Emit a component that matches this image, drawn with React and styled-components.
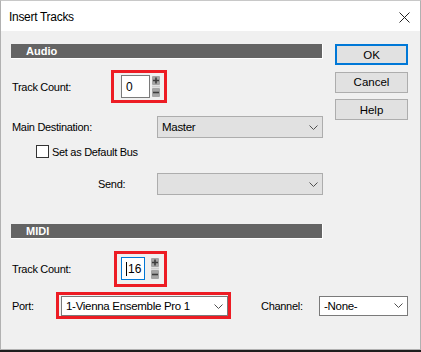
import React from 'react';
import styled, { createGlobalStyle } from 'styled-components';

const GlobalStyle = createGlobalStyle`
  html, body {
    margin: 0;
    padding: 0;
    background: #1e1e1e;
  }
  body {
    font-family: "Liberation Sans", Arial, sans-serif;
    font-size: 11px;
    color: #000;
  }
`;

const Window = styled.div`
  width: 421px;
  height: 350px;
  box-sizing: border-box;
  border: 1px solid #b1b1b1;
  border-top-color: #c8c8c8;
  background: #f0f0f0;
  display: flex;
  flex-direction: column;
`;

const TitleBar = styled.div`
  height: 30px;
  background: #fff;
  display: flex;
  align-items: center;
  justify-content: space-between;
  padding: 0 10px 0 8px;
  flex-shrink: 0;
`;

const Title = styled.span`
  font-size: 12px;
  letter-spacing: -0.3px;
  color: #000;
  padding-top: 2px;
`;

const CloseIcon = styled.svg`
  width: 11px;
  height: 11px;
  margin-top: 2px;
`;

const Body = styled.div`
  flex: 1;
  display: grid;
  grid-template-columns: 312px 73px;
  column-gap: 12px;
  align-content: start;
  padding: 13px 0 0 10px;
`;

const Section = styled.div`
  display: flex;
  flex-direction: column;
  grid-column: ${p => (p.$span ? '1 / -1' : 'auto')};
  margin-top: ${p => p.$top || 0}px;
`;

const SectionBar = styled.div`
  width: 296px;
  height: 14px;
  padding-left: 15px;
  background: #646464;
  border-right: 1px solid #fff;
  border-bottom: 1px solid #fff;
  color: #fff;
  font-weight: bold;
  font-size: 11px;
  line-height: 14px;
`;

const Row = styled.div`
  display: flex;
  align-items: center;
  margin-top: ${p => p.$top || 0}px;
  padding-left: ${p => p.$indent || 0}px;
`;

const Label = styled.span`
  width: ${p => p.$w}px;
  flex-shrink: 0;
  box-sizing: border-box;
  padding-left: ${p => p.$pl ?? 1}px;
  margin-left: ${p => p.$ml || 0}px;
  letter-spacing: -0.3px;
  white-space: nowrap;
`;

const Highlight = styled.div`
  display: inline-flex;
  align-items: center;
  border: 3px solid #ed1c24;
  padding: ${p => p.$pad};
  gap: ${p => p.$gap || 0}px;
`;

const NumberField = styled.div`
  width: ${p => p.$w}px;
  height: ${p => p.$h}px;
  box-sizing: border-box;
  background: #fff;
  border: 1px solid ${p => (p.$focused ? '#0078d7' : '#7a7a7a')};
  display: flex;
  align-items: center;
  padding-left: 4px;
  font-size: 12px;
  color: #000;
`;

const Caret = styled.span`
  display: inline-block;
  width: 1px;
  height: 14px;
  background: #000;
  margin-right: 1px;
`;

const Spinner = styled.svg`
  width: 8px;
  height: 21px;
  flex-shrink: 0;
`;

const Select = styled.div`
  width: ${p => p.$w}px;
  height: ${p => p.$h}px;
  box-sizing: border-box;
  display: flex;
  align-items: center;
  justify-content: space-between;
  padding: 0 4px 0 4px;
  background: ${p => (p.$plain ? '#fff' : '#e1e1e1')};
  border: 1px solid ${p => (p.$plain ? '#7a7a7a' : '#adadad')};
  font-size: 11.5px;
  letter-spacing: -0.3px;
  white-space: nowrap;
`;

const Chevron = styled.svg`
  width: 9px;
  height: 5px;
  flex-shrink: 0;
`;

const CheckBox = styled.span`
  width: 13px;
  height: 13px;
  box-sizing: border-box;
  border: 1px solid #333;
  background: #fff;
  margin-right: 3px;
  flex-shrink: 0;
`;

const ButtonColumn = styled.div`
  display: flex;
  flex-direction: column;
  gap: 6.5px;
`;

const Button = styled.div`
  height: 21px;
  box-sizing: border-box;
  display: flex;
  align-items: center;
  justify-content: center;
  background: #e1e1e1;
  border: ${p => (p.$default ? '2px solid #0078d7' : '1px solid #adadad')};
  font-size: 11.5px;
  color: #000;
`;

const ChevronDown = () => (
  <Chevron viewBox="0 0 9 5">
    <path d="M0.5 0.5 L4.5 4.5 L8.5 0.5" fill="none" stroke="#505050" strokeWidth="1" />
  </Chevron>
);

const SpinButtons = () => (
  <Spinner viewBox="0 0 8 21">
    <rect x="0" y="0" width="8" height="9" rx="1" fill="#a4a4a4" />
    <rect x="0" y="9.5" width="8" height="2" fill="#cfcfcf" />
    <rect x="0" y="12" width="8" height="9" rx="1" fill="#a4a4a4" />
    <path d="M4 1.5 V7.5 M1 4.5 H7" stroke="#3c3c3c" strokeWidth="1.6" />
    <path d="M1 16.5 H7" stroke="#3c3c3c" strokeWidth="1.6" />
  </Spinner>
);

export default function App() {
  return (
    <>
      <GlobalStyle />
      <Window>
        <TitleBar>
          <Title>Insert Tracks</Title>
          <CloseIcon viewBox="0 0 11 11">
            <path d="M0.5 0.5 L10.5 10.5 M10.5 0.5 L0.5 10.5" stroke="#222" strokeWidth="1" />
          </CloseIcon>
        </TitleBar>
        <Body>
          <Section>
            <SectionBar>Audio</SectionBar>
            <Row $top={11}>
              <Label $w={100}>Track Count:</Label>
              <Highlight $pad="2px 4px 2px 7px" $gap={2}>
                <NumberField $w={29} $h={23}>0</NumberField>
                <SpinButtons />
              </Highlight>
            </Row>
            <Row $top={13}>
              <Label $w={146}>Main Destination:</Label>
              <Select $w={167} $h={22}>
                <span>Master</span>
                <ChevronDown />
              </Select>
            </Row>
            <Row $top={7} $indent={25}>
              <CheckBox />
              <Label $w={120} $pl={0}>Set as Default Bus</Label>
            </Row>
            <Row $top={15}>
              <Label $w={146} $pl={87}>Send:</Label>
              <Select $w={167} $h={22}>
                <span />
                <ChevronDown />
              </Select>
            </Row>
          </Section>
          <ButtonColumn>
            <Button $default>OK</Button>
            <Button>Cancel</Button>
            <Button>Help</Button>
          </ButtonColumn>
          <Section $span $top={29}>
            <SectionBar>MIDI</SectionBar>
            <Row $top={12}>
              <Label $w={103}>Track Count:</Label>
              <Highlight $pad="3px 5px 4px 4px" $gap={6}>
                <NumberField $w={24} $h={23} $focused>
                  <Caret />16
                </NumberField>
                <SpinButtons />
              </Highlight>
            </Row>
            <Row $top={5}>
              <Label $w={45}>Port:</Label>
              <Highlight $pad="1px 0 0 2px">
                <Select $w={167} $h={20} $plain>
                  <span>1-Vienna Ensemble Pro 1</span>
                  <ChevronDown />
                </Select>
              </Highlight>
              <Label $w={58} $ml={30} $pl={0}>Channel:</Label>
              <Select $w={90} $h={20} $plain>
                <span>-None-</span>
                <ChevronDown />
              </Select>
            </Row>
          </Section>
        </Body>
      </Window>
    </>
  );
}
